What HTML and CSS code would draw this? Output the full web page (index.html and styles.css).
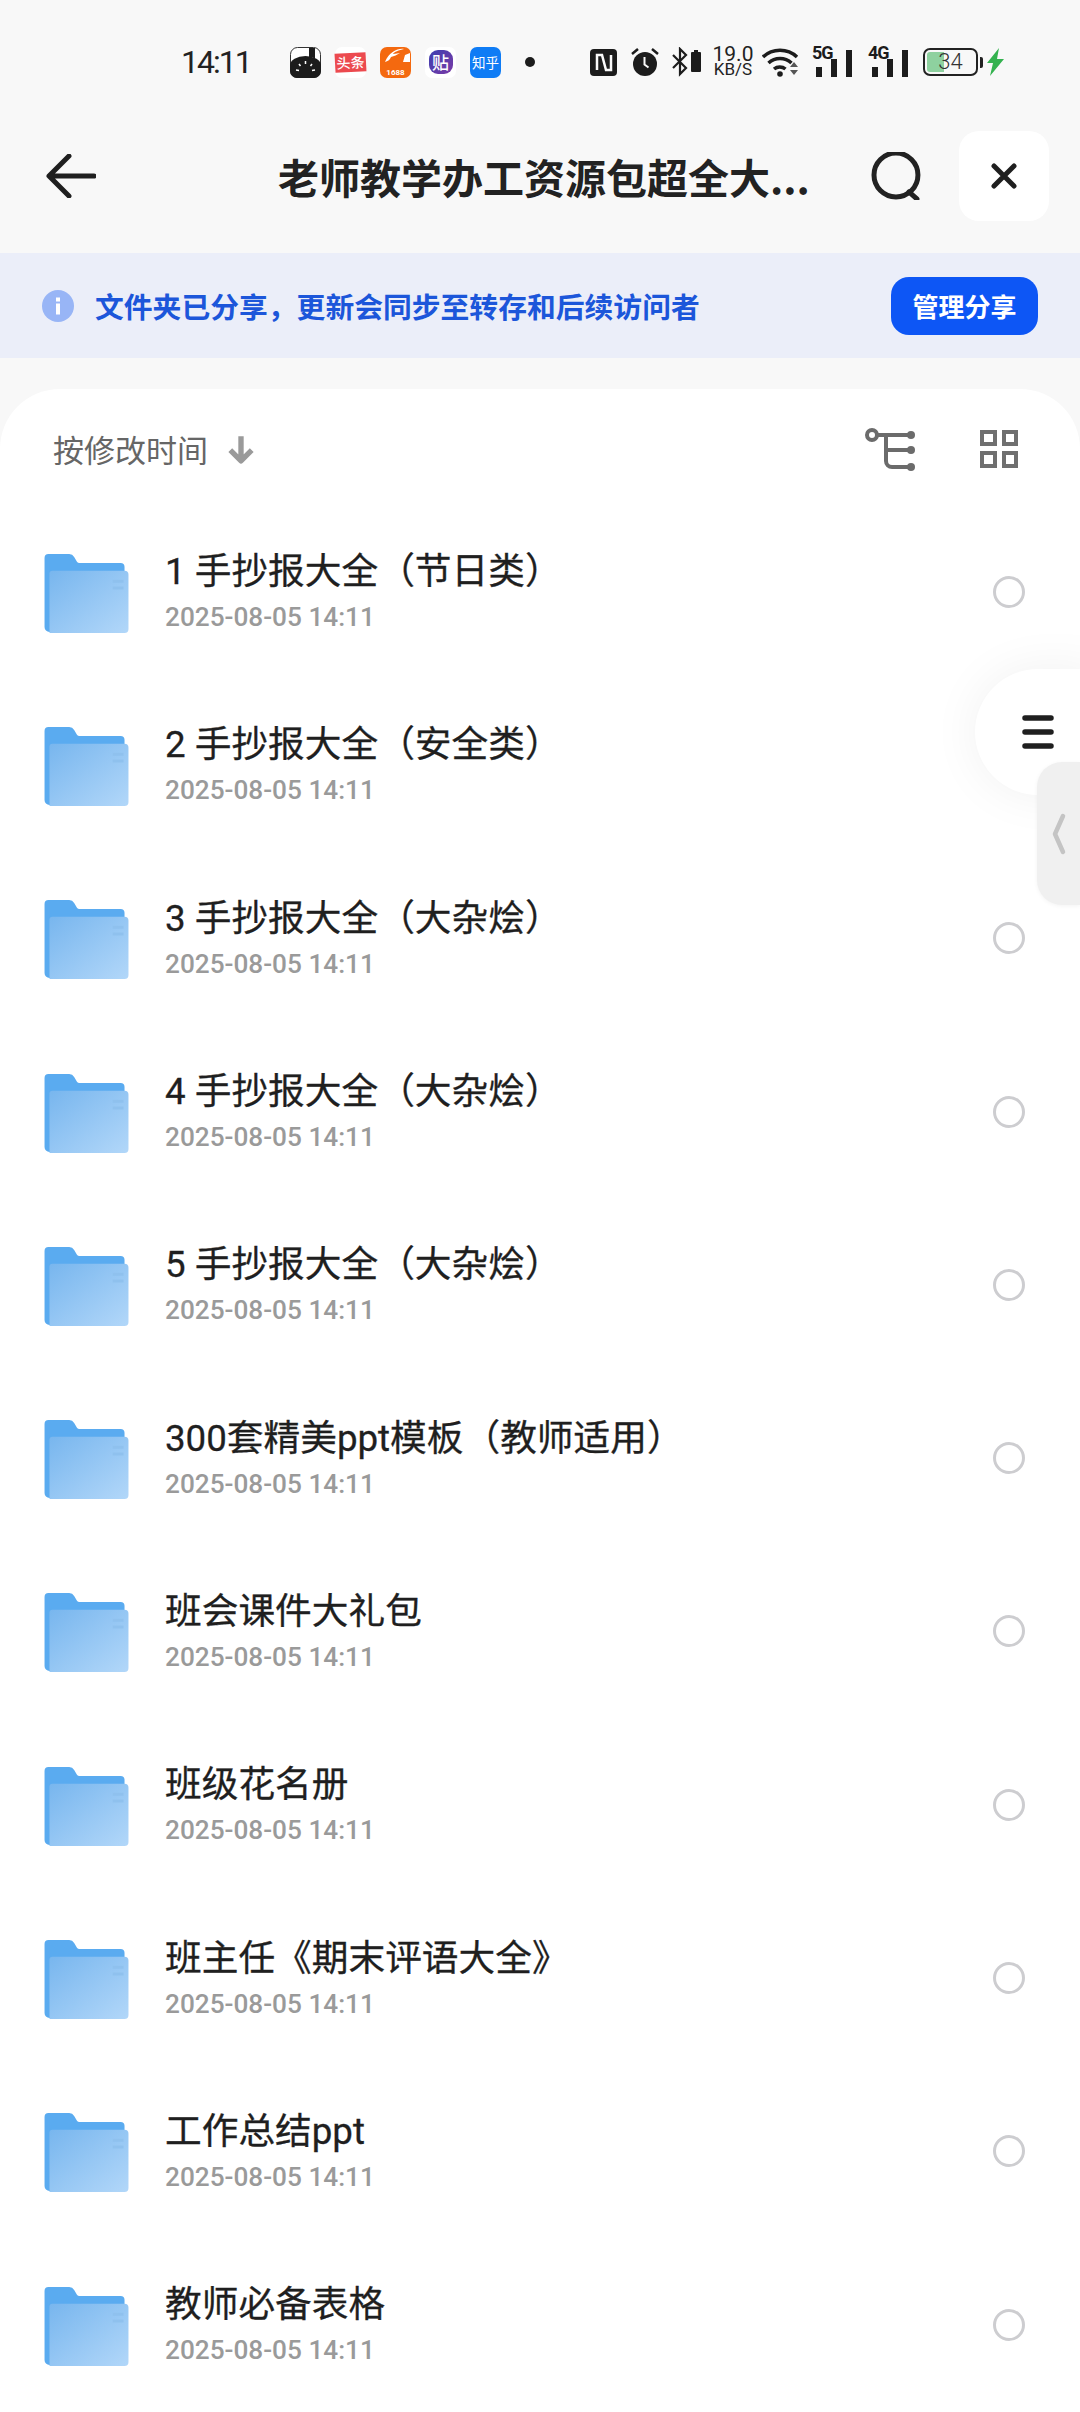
FILE: index.html
```html
<!DOCTYPE html>
<html lang="zh-CN">
<head>
    <meta charset="UTF-8">
    <meta name="viewport" content="width=device-width, initial-scale=1.0">
    <link rel="stylesheet" href="styles.css">
    <title>老师教学办工资源包超全大全</title>
</head>
<body>

    <svg class="defs" width="0" height="0">
        <defs>
            <linearGradient id="folder-front" x1="0" y1="0" x2="1" y2="1">
                <stop offset="0" stop-color="#78b6ee"/>
                <stop offset="1" stop-color="#b2d7f9"/>
            </linearGradient>
            <symbol id="folder" viewBox="0 0 86 80">
                <path d="M0 4a4 4 0 0 1 4-4h21a6 6 0 0 1 5 3l3 5a3 3 0 0 0 3 1h41a4 4 0 0 1 4 4v63a4 4 0 0 1-4 3H5a5 5 0 0 1-5-5z" fill="#5aabf0"/>
                <path d="M5 20a3 3 0 0 1 3-3h73a4 4 0 0 1 4 4v55a4 4 0 0 1-4 4H5z" fill="url(#folder-front)"/>
                <path d="M69 26h11v3H69zM69 33h11v3H69z" fill="#8fc1ee"/>
            </symbol>
        </defs>
    </svg>

    <div class="status-bar">
        <span class="clock">14:11</span>
        <div class="app-icons">
            <span class="app app-book">
                <svg width="31" height="31" viewBox="0 0 31 31">
                    <rect x="0.5" y="0.5" width="30" height="30" rx="7" fill="#fff" stroke="#333"/>
                    <path d="M0 18a15.5 9 0 0 1 31 0v6a7 7 0 0 1-7 7H7a7 7 0 0 1-7-7z" fill="#1c1c1c"/>
                    <path d="M19 1h6v11l-3-2-3 2z" fill="#1c1c1c"/>
                    <path d="M15.500 14v3M9 17l1.500 2M22 17l-1.500 2M6 23l3 .5M25 23l-3 .5" stroke="#fff" stroke-width="1.500"/>
                </svg>
            </span>
            <span class="app app-toutiao"><b>头条</b></span>
            <span class="app app-1688">
                <svg width="31" height="22" viewBox="0 0 31 22">
                    <path d="M5 15C9 5 18 1 24 2c-5 1-10 3-11 5 3 0 5-1 7-1-3 2-6 3-9 4-1 2-2 4-6 5zM25 8l5-2v9h-7z" fill="#fff"/>
                </svg>
                <i>1688</i>
            </span>
            <span class="app app-tie"><b>贴</b></span>
            <span class="app app-zhihu">知乎</span>
            <span class="notif-dot"></span>
        </div>
        <div class="sys-icons">
            <svg class="nfc" width="27" height="27" viewBox="0 0 27 27">
                <rect width="27" height="27" rx="4" fill="#1c1c1c"/>
                <path d="M7 21V6h5l4 15h5V6" fill="none" stroke="#fafafa" stroke-width="2.500"/>
            </svg>
            <svg class="alarm" width="28" height="30" viewBox="0 0 28 30">
                <circle cx="14" cy="17" r="12" fill="#1c1c1c"/>
                <path d="M13.500 10v7.500l4 3" fill="none" stroke="#fafafa" stroke-width="2"/>
                <path d="M1 7l6-5M27 7l-6-5" stroke="#1c1c1c" stroke-width="2.500"/>
            </svg>
            <svg class="bt" width="30" height="30" viewBox="0 0 30 30">
                <path d="M1 8l13 13-6 6V2l6 6L1 21" fill="none" stroke="#1c1c1c" stroke-width="2.200"/>
                <path d="M20 5h2V3h4v2h2a1 1 0 0 1 1 1v18a1 1 0 0 1-1 1h-8a1 1 0 0 1-1-1V6a1 1 0 0 1 1-1z" fill="#1c1c1c"/>
            </svg>
            <div class="net-speed">19.0 KB/S</div>
            <svg class="wifi" width="38" height="30" viewBox="0 0 38 30">
                <path d="M1 10a25 25 0 0 1 34 0M6.500 16a17 17 0 0 1 23 0M12 22a9 9 0 0 1 11.500 0" fill="none" stroke="#1c1c1c" stroke-width="3.500"/>
                <circle cx="18" cy="27" r="2.800" fill="#1c1c1c"/>
                <path d="M28 20l4-5 4 5zM28 23l4 5 4-5z" fill="#555"/>
            </svg>
            <div class="signal"><span class="gen">5G</span><span class="bars"><i class="b1"></i><i class="b2"></i><i class="b3"></i></span></div>
            <div class="signal"><span class="gen">4G</span><span class="bars"><i class="b1"></i><i class="b2"></i><i class="b3"></i></span></div>
            <div class="battery"><span class="batt-fill"></span><span class="batt-num">34</span></div>
            <span class="batt-tip"></span>
            <svg class="bolt" width="17" height="28" viewBox="0 0 17 28">
                <path d="M12 0L0 15h6L3 28l14-17h-7z" fill="#34b24f"/>
            </svg>
        </div>
    </div>

    <div class="top-bar">
        <svg class="back" width="50" height="44" viewBox="0 0 50 44">
            <path d="M23 2L3 22l20 20M3 22h45" fill="none" stroke="#1f1f1f" stroke-width="5" stroke-linecap="round" stroke-linejoin="round"/>
        </svg>
        <h1 class="page-title">老师教学办工资源包超全大...</h1>
        <svg class="search" width="52" height="48" viewBox="0 0 52 48">
            <circle cx="26" cy="23" r="22" fill="none" stroke="#222" stroke-width="5"/>
            <path d="M39 40l8 7" stroke="#222" stroke-width="5" stroke-linecap="round"/>
        </svg>
        <div class="close-btn">
            <svg width="26" height="26" viewBox="0 0 26 26">
                <path d="M3 3l20 20M23 3L3 23" stroke="#1f1f1f" stroke-width="5" stroke-linecap="round"/>
            </svg>
        </div>
    </div>

    <div class="share-banner">
        <svg class="info" width="32" height="32" viewBox="0 0 32 32">
            <circle cx="16" cy="16" r="16" fill="#98b5f6"/>
            <rect x="14" y="13.500" width="4" height="11" fill="#fff"/>
            <rect x="14" y="7.500" width="4" height="4" fill="#fff"/>
        </svg>
        <span class="banner-text">文件夹已分享，更新会同步至转存和后续访问者</span>
        <span class="manage-btn">管理分享</span>
    </div>

    <main class="panel">
        <div class="sort-bar">
            <span class="sort-label">按修改时间</span>
            <svg class="sort-arrow" width="28" height="30" viewBox="0 0 26 28">
                <path d="M13 2v23M3 15l10 10 10-10" fill="none" stroke="#9a9a9a" stroke-width="5" stroke-linejoin="round"/>
            </svg>
            <svg class="tree" width="52" height="44" viewBox="0 0 52 44">
                <circle cx="7" cy="8" r="5" fill="none" stroke="#6b6b6b" stroke-width="4"/>
                <path d="M12 8h34M21 8v26a6 6 0 0 0 6 6h19M21 23h25" fill="none" stroke="#6b6b6b" stroke-width="4"/>
                <circle cx="46" cy="8" r="4" fill="#6b6b6b"/>
                <circle cx="46" cy="23" r="4" fill="#6b6b6b"/>
                <circle cx="46" cy="40" r="4" fill="#6b6b6b"/>
            </svg>
            <div class="grid-icon"><i></i><i></i><i></i><i></i></div>
        </div>

        <ul class="file-list">
            <li class="file-row">
                <svg class="folder"><use href="#folder"/></svg>
                <div class="file-info"><div class="file-name">1 手抄报大全（节日类）</div><div class="file-date">2025-08-05 14:11</div></div>
                <span class="radio"></span>
            </li>
            <li class="file-row">
                <svg class="folder"><use href="#folder"/></svg>
                <div class="file-info"><div class="file-name">2 手抄报大全（安全类）</div><div class="file-date">2025-08-05 14:11</div></div>
                <span class="radio"></span>
            </li>
            <li class="file-row">
                <svg class="folder"><use href="#folder"/></svg>
                <div class="file-info"><div class="file-name">3 手抄报大全（大杂烩）</div><div class="file-date">2025-08-05 14:11</div></div>
                <span class="radio"></span>
            </li>
            <li class="file-row">
                <svg class="folder"><use href="#folder"/></svg>
                <div class="file-info"><div class="file-name">4 手抄报大全（大杂烩）</div><div class="file-date">2025-08-05 14:11</div></div>
                <span class="radio"></span>
            </li>
            <li class="file-row">
                <svg class="folder"><use href="#folder"/></svg>
                <div class="file-info"><div class="file-name">5 手抄报大全（大杂烩）</div><div class="file-date">2025-08-05 14:11</div></div>
                <span class="radio"></span>
            </li>
            <li class="file-row">
                <svg class="folder"><use href="#folder"/></svg>
                <div class="file-info"><div class="file-name">300套精美ppt模板（教师适用）</div><div class="file-date">2025-08-05 14:11</div></div>
                <span class="radio"></span>
            </li>
            <li class="file-row">
                <svg class="folder"><use href="#folder"/></svg>
                <div class="file-info"><div class="file-name">班会课件大礼包</div><div class="file-date">2025-08-05 14:11</div></div>
                <span class="radio"></span>
            </li>
            <li class="file-row">
                <svg class="folder"><use href="#folder"/></svg>
                <div class="file-info"><div class="file-name">班级花名册</div><div class="file-date">2025-08-05 14:11</div></div>
                <span class="radio"></span>
            </li>
            <li class="file-row">
                <svg class="folder"><use href="#folder"/></svg>
                <div class="file-info"><div class="file-name">班主任《期末评语大全》</div><div class="file-date">2025-08-05 14:11</div></div>
                <span class="radio"></span>
            </li>
            <li class="file-row">
                <svg class="folder"><use href="#folder"/></svg>
                <div class="file-info"><div class="file-name">工作总结ppt</div><div class="file-date">2025-08-05 14:11</div></div>
                <span class="radio"></span>
            </li>
            <li class="file-row">
                <svg class="folder"><use href="#folder"/></svg>
                <div class="file-info"><div class="file-name">教师必备表格</div><div class="file-date">2025-08-05 14:11</div></div>
                <span class="radio"></span>
            </li>
        </ul>
    </main>

    <!-- boutons flottants a droite -->
    <div class="fab">
        <svg width="32" height="34" viewBox="0 0 32 34">
            <path d="M3 3h26M3 17h26M3 31h26" stroke="#1f1f1f" stroke-width="5.500" stroke-linecap="round"/>
        </svg>
    </div>
    <div class="side-handle">
        <svg width="14" height="42" viewBox="0 0 14 42">
            <path d="M11 3L3 21l8 18" fill="none" stroke="#c4c4c4" stroke-width="4.500" stroke-linecap="round" stroke-linejoin="round"/>
        </svg>
    </div>

</body>
</html>
```

FILE: styles.css
```css
* {
    box-sizing: border-box;
}

html, body {
    margin: 0;
    height: 2412px;
    overflow: hidden;
}

body {
    position: relative;
    background-color: #f8f8f8;
    color: #1f1f1f;
    font-family: Roboto, "Noto Sans CJK SC", sans-serif;
}

.defs {
    position: absolute;
}

/* Barre de statut */
.status-bar {
    height: 124px;
    padding-left: 181px;
    display: flex;
    align-items: center;
}

.clock {
    width: 109px;
    font-size: 32px;
    letter-spacing: -2px;
    color: #222;
}

.app-icons {
    display: flex;
    align-items: center;
    gap: 14px;
    width: 300px;
}

.app {
    width: 31px;
    height: 31px;
    border-radius: 7px;
    display: flex;
    flex-direction: column;
    align-items: center;
    justify-content: center;
    font-family: "Noto Sans CJK SC", sans-serif;
}

.app-toutiao {
    background-color: #fff;
}

.app-toutiao b {
    width: 31px;
    background-color: #ec4a4f;
    color: #fff;
    font-size: 14px;
    line-height: 19px;
    text-align: center;
    white-space: nowrap;
    font-weight: 500;
    transform: rotate(-3deg);
}

.app-1688 {
    background-color: #f4690f;
    overflow: hidden;
}

.app-1688 i {
    font-style: normal;
    font-family: Roboto, sans-serif;
    font-size: 8px;
    line-height: 8px;
    color: #fff;
    font-weight: 700;
}

.app-tie {
    background-color: #fff;
}

.app-tie b {
    width: 24px;
    height: 24px;
    border-radius: 9px;
    background: linear-gradient(135deg, #3c3fb0, #7a3aa6);
    color: #fff;
    font-size: 17px;
    line-height: 24px;
    text-align: center;
    font-weight: 500;
}

.app-zhihu {
    background-color: #0f7cf5;
    color: #fff;
    font-size: 13.500px;
    white-space: nowrap;
}

.notif-dot {
    width: 10px;
    height: 10px;
    border-radius: 50%;
    background-color: #1c1c1c;
    margin-left: 10px;
}

.sys-icons {
    display: flex;
    align-items: center;
}

.nfc {
    margin-right: 14px;
}

.alarm {
    margin-right: 13px;
}

.bt {
    margin-right: 10px;
}

/* 19.0 plus grand que l'unite */
.net-speed {
    width: 42px;
    margin-right: 8px;
    text-align: center;
    font-size: 17px;
    line-height: 15px;
    color: #222;
}

.net-speed::first-line {
    font-size: 21px;
}

.wifi {
    margin-right: 12px;
}

.signal {
    width: 40px;
    height: 30px;
    margin-right: 16px;
    display: flex;
    position: relative;
}

.gen {
    position: absolute;
    left: 0;
    top: -2px;
    font-size: 18px;
    line-height: 16px;
    letter-spacing: -1px;
    font-weight: 700;
    color: #1c1c1c;
}

.bars {
    width: 100%;
    display: flex;
    align-items: flex-end;
    justify-content: flex-end;
    gap: 9px;
}

.bars i {
    width: 6px;
    background-color: #1c1c1c;
}

.bars .b1 {
    height: 10px;
}

.bars .b2 {
    height: 18px;
}

.bars .b3 {
    height: 27px;
}

.battery {
    width: 55px;
    height: 28px;
    margin-left: -1px;
    border: 2px solid #222;
    border-radius: 7px;
    position: relative;
    overflow: hidden;
    text-align: center;
    font-size: 22px;
    font-weight: 300;
    line-height: 24px;
    color: #333;
}

.batt-fill {
    position: absolute;
    left: 2px;
    top: 2px;
    bottom: 2px;
    width: 17px;
    background-color: #8ed19f;
    border-radius: 3px 0 0 3px;
}

.batt-num {
    position: relative;
}

.batt-tip {
    width: 3px;
    height: 11px;
    margin: 0 4px 0 2px;
    background-color: #222;
    border-radius: 0 2px 2px 0;
}

/* Barre de titre */
.top-bar {
    height: 103px;
    margin-bottom: 26px;
    padding: 0 31px 0 46px;
    display: flex;
    align-items: center;
}

.back {
    margin-right: 182px;
}

.page-title {
    margin: 0;
    width: 593px;
    font-size: 41px;
    line-height: 50px;
    font-weight: 700;
    white-space: nowrap;
    color: #222;
    font-family: "Noto Sans CJK SC", sans-serif;
}

.search {
    margin-right: 37px;
}

.close-btn {
    width: 90px;
    height: 90px;
    border-radius: 20px;
    background-color: #fff;
    display: flex;
    align-items: center;
    justify-content: center;
}

/* Bandeau de partage */
.share-banner {
    height: 105px;
    margin-bottom: 31px;
    padding: 0 42px;
    background-color: #ebeef9;
    display: flex;
    align-items: center;
}

.info {
    margin-right: 21px;
}

.banner-text {
    flex: 1;
    font-size: 28.800px;
    font-weight: 700;
    color: #1c56da;
    font-family: "Noto Sans CJK SC", sans-serif;
}

.manage-btn {
    width: 147px;
    height: 58px;
    border-radius: 18px;
    background-color: #0d56f5;
    color: #fff;
    font-size: 26px;
    font-weight: 700;
    line-height: 58px;
    text-align: center;
    font-family: "Noto Sans CJK SC", sans-serif;
}

/* Panneau blanc */
.panel {
    background-color: #fff;
    border-radius: 60px 60px 0 0;
    height: 2100px;
}

.sort-bar {
    height: 116px;
    padding: 3px 62px 0 53px;
    display: flex;
    align-items: center;
}

.sort-label {
    font-size: 31px;
    color: #666;
    margin-right: 19px;
    font-family: "Noto Sans CJK SC", sans-serif;
}

.sort-arrow {
    margin-right: auto;
}

.tree {
    margin-right: 63px;
}

.grid-icon {
    width: 38px;
    height: 38px;
    display: grid;
    grid-template-columns: 1fr 1fr;
    gap: 5px;
}

.grid-icon i {
    border: 4px solid #6f6f6f;
}

.file-list {
    list-style: none;
    margin: 0;
    padding: 0;
}

.file-row {
    height: 173.3px;
    padding: 0 55px 0 44px;
    display: flex;
    align-items: center;
}

.folder {
    width: 86px;
    height: 79px;
    flex-shrink: 0;
    margin: 3px 35px 0 0;
}

.file-info {
    flex: 1;
    margin-top: 2px;
}

.file-name {
    font-size: 36.700px;
    line-height: 50px;
    color: #1f1f1f;
    -webkit-text-stroke: 0.3px #1f1f1f;
}

.file-date {
    font-size: 26.200px;
    line-height: 41px;
    font-weight: 500;
    color: #9a9a9a;
}

.radio {
    width: 32px;
    height: 32px;
    border: 3px solid #cdcdd0;
    border-radius: 50%;
    flex-shrink: 0;
}

/* Boutons flottants */
.fab {
    position: absolute;
    left: 975px;
    top: 669px;
    width: 125px;
    height: 126px;
    border-radius: 63px 0 0 63px;
    background-color: #fff;
    box-shadow: 0 0 50px rgba(0, 0, 0, 0.06);
    display: flex;
    align-items: center;
    padding-left: 47px;
}

.side-handle {
    position: absolute;
    left: 1037px;
    top: 762px;
    width: 43px;
    height: 143px;
    border-radius: 25px 0 0 25px;
    background-color: #f0f0f0;
    box-shadow: 0 1px 4px rgba(0, 0, 0, 0.05);
    display: flex;
    align-items: center;
    padding-left: 15px;
}
```
